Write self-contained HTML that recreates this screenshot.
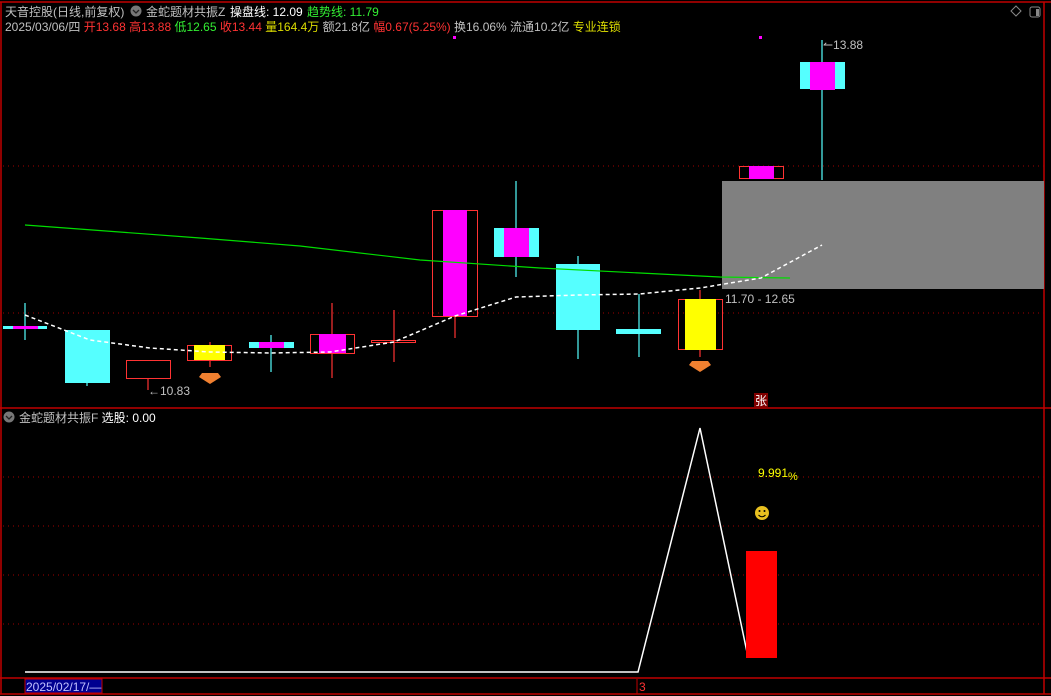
<!DOCTYPE html>
<html><head><meta charset="utf-8"><style>
body{margin:0;background:#000;width:1051px;height:696px;overflow:hidden;font-family:"Liberation Sans","Noto Sans CJK SC",sans-serif}
svg{position:absolute;left:0;top:0}
text{font-family:"Liberation Sans","Noto Sans CJK SC",sans-serif;font-size:12px}
</style></head><body>
<svg width="1051" height="696" viewBox="0 0 1051 696">
<!-- frame -->
<g stroke="#c00000" stroke-width="1.5" fill="none">
<line x1="1" y1="2" x2="1" y2="694"/>
<line x1="1044" y1="2" x2="1044" y2="694"/>
<line x1="0" y1="2" x2="1051" y2="2"/>
<line x1="0" y1="408" x2="1051" y2="408"/>
<line x1="0" y1="678" x2="1051" y2="678"/>
<line x1="0" y1="694" x2="1051" y2="694"/>
</g>
<g stroke="#a00000" stroke-width="1" stroke-dasharray="1,4">
<line x1="3" y1="166" x2="1044" y2="166"/>
<line x1="3" y1="313" x2="1044" y2="313"/>
<line x1="3" y1="477" x2="1044" y2="477"/>
<line x1="3" y1="526" x2="1044" y2="526"/>
<line x1="3" y1="575" x2="1044" y2="575"/>
<line x1="3" y1="624" x2="1044" y2="624"/>
</g>
<!-- gray zone -->
<rect x="722" y="181" width="322" height="108" fill="#808080"/>
<!-- wicks -->
<g stroke-width="1.2">
<line x1="25" y1="303" x2="25" y2="340" stroke="#55ffff"/>
<line x1="87" y1="383" x2="87" y2="386" stroke="#55ffff"/>
<line x1="148" y1="378" x2="148" y2="390" stroke="#ff3333"/>
<line x1="210" y1="342" x2="210" y2="367" stroke="#ff3333"/>
<line x1="271" y1="335" x2="271" y2="372" stroke="#55ffff"/>
<line x1="332" y1="303" x2="332" y2="378" stroke="#ff3333"/>
<line x1="394" y1="310" x2="394" y2="362" stroke="#ff3333"/>
<line x1="455" y1="316" x2="455" y2="338" stroke="#ff3333"/>
<line x1="516" y1="181" x2="516" y2="277" stroke="#55ffff"/>
<line x1="578" y1="256" x2="578" y2="359" stroke="#55ffff"/>
<line x1="639" y1="294" x2="639" y2="357" stroke="#55ffff"/>
<line x1="700" y1="290" x2="700" y2="357" stroke="#ff3333"/>
<line x1="822" y1="40" x2="822" y2="180" stroke="#55ffff"/>
</g>
<!-- bodies -->
<rect x="3" y="326" width="44" height="3" fill="#55ffff"/><rect x="13" y="326" width="25" height="3" fill="#ff00ff"/>
<rect x="65" y="330" width="45" height="53" fill="#55ffff"/>
<rect x="126.5" y="360.5" width="44" height="18" fill="none" stroke="#ff3333"/>
<rect x="187.5" y="345.5" width="44" height="15" fill="none" stroke="#ff3333"/><rect x="194" y="345" width="31" height="15" fill="#ffff00"/>
<rect x="249" y="342" width="45" height="6" fill="#55ffff"/><rect x="259" y="342" width="25" height="6" fill="#ff00ff"/>
<rect x="310.5" y="334.5" width="44" height="19" fill="none" stroke="#ff3333"/><rect x="319" y="334" width="27" height="19" fill="#ff00ff"/>
<rect x="371.5" y="340.5" width="44" height="2" fill="none" stroke="#ff3333"/>
<rect x="432.5" y="210.5" width="45" height="106" fill="none" stroke="#ff3333"/><rect x="443" y="210" width="24" height="106" fill="#ff00ff"/>
<rect x="494" y="228" width="45" height="29" fill="#55ffff"/><rect x="504" y="228" width="25" height="29" fill="#ff00ff"/>
<rect x="556" y="264" width="44" height="66" fill="#55ffff"/>
<rect x="616" y="329" width="45" height="5" fill="#55ffff"/>
<rect x="678.5" y="299.5" width="44" height="50" fill="none" stroke="#ff3333"/><rect x="685" y="299" width="31" height="51" fill="#ffff00"/>
<rect x="739.5" y="166.5" width="44" height="12" fill="none" stroke="#ff3333"/><rect x="749" y="166" width="25" height="13" fill="#ff00ff"/>
<rect x="800" y="62" width="45" height="27" fill="#55ffff"/><rect x="810" y="62" width="25" height="28" fill="#ff00ff"/>
<!-- lines -->
<polyline points="25,225 200,238 300,246 420,260 540,268 640,273 720,277 790,278" fill="none" stroke="#00dd00" stroke-width="1.2"/>
<polyline points="25,315 90,340 150,348 210,352 270,353 330,352 394,342 455,316 516,297 578,295 639,294 700,288 761,278 822,245" fill="none" stroke="#fff" stroke-width="1.5" stroke-dasharray="4,3"/>
<rect x="453" y="36" width="3" height="3" fill="#ff00ff"/><rect x="759" y="36" width="3" height="3" fill="#ff00ff"/>
<!-- diamonds -->
<g fill="#f08030"><polygon points="202,373 218,373 221,377 210,384 199,377"/><polygon points="692,361 708,361 711,365 700,372 689,365"/></g>
<!-- labels -->
<text x="148" y="395" fill="#c0c0c0">←10.83</text>
<text x="823" y="49" fill="#c0c0c0">↼13.88</text>
<text x="725" y="303" fill="#c0c0c0">11.70 - 12.65</text>
<rect x="754" y="393" width="14" height="14" fill="#800000"/><text x="755" y="405" fill="#fff" font-size="11">张</text>
<!-- icons top right -->
<polygon points="1016,6 1021,11 1016,16 1011,11" fill="none" stroke="#888"/>
<rect x="1030" y="7" width="10" height="10" rx="2" fill="none" stroke="#888"/><rect x="1036" y="9" width="3" height="7" fill="#888"/>
<!-- lower pane -->
<polyline points="25,672 638,672 700,428 748,657" fill="none" stroke="#fff" stroke-width="1.5"/>
<rect x="746" y="551" width="31" height="107" fill="#ff0000"/>
<text x="758" y="477" fill="#ffff00">9.991<tspan font-size="11" dy="3">%</tspan></text>
<circle cx="762" cy="513" r="7" fill="#e8c020"/><circle cx="759.5" cy="511" r="1" fill="#000"/><circle cx="764.5" cy="511" r="1" fill="#000"/><path d="M758.5 515 Q762 518.5 765.5 515" stroke="#000" fill="none"/>
<!-- headers -->
<circle cx="136" cy="11" r="5.5" fill="#777"/><path d="M133 10 L136 13 L139 10" stroke="#222" fill="none" stroke-width="1.3"/>
<text x="5" y="16" fill="#c0c0c0">天音控股(日线,前复权)</text>
<text x="146" y="16" fill="#c0c0c0">金蛇题材共振Z</text>
<text x="230" y="16" fill="#fff">操盘线: 12.09</text>
<text x="307" y="16" fill="#33ee33">趋势线: 11.79</text>
<text x="5" y="31" fill="#c0c0c0">2025/03/06/四 <tspan fill="#ff3333">开13.68 高13.88</tspan> <tspan fill="#33ee33">低12.65</tspan> <tspan fill="#ff3333">收13.44</tspan> <tspan fill="#dddd00">量164.4万</tspan> 额21.8亿 <tspan fill="#ff3333">幅0.67(5.25%)</tspan> 换16.06% 流通10.2亿 <tspan fill="#dddd00">专业连锁</tspan></text>
<circle cx="9" cy="417" r="5.5" fill="#777"/><path d="M6 416 L9 419 L12 416" stroke="#222" fill="none" stroke-width="1.3"/>
<text x="19" y="422" fill="#c0c0c0">金蛇题材共振F  <tspan fill="#fff">选股: 0.00</tspan></text>
<!-- bottom -->
<rect x="25" y="679" width="77" height="14" fill="#000090" stroke="#c00000"/>
<text x="26" y="691" fill="#c0c0ff">2025/02/17/—</text>
<line x1="637" y1="679" x2="637" y2="694" stroke="#c00000"/>
<text x="639" y="691" fill="#ff3333">3</text>
</svg>
</body></html>
